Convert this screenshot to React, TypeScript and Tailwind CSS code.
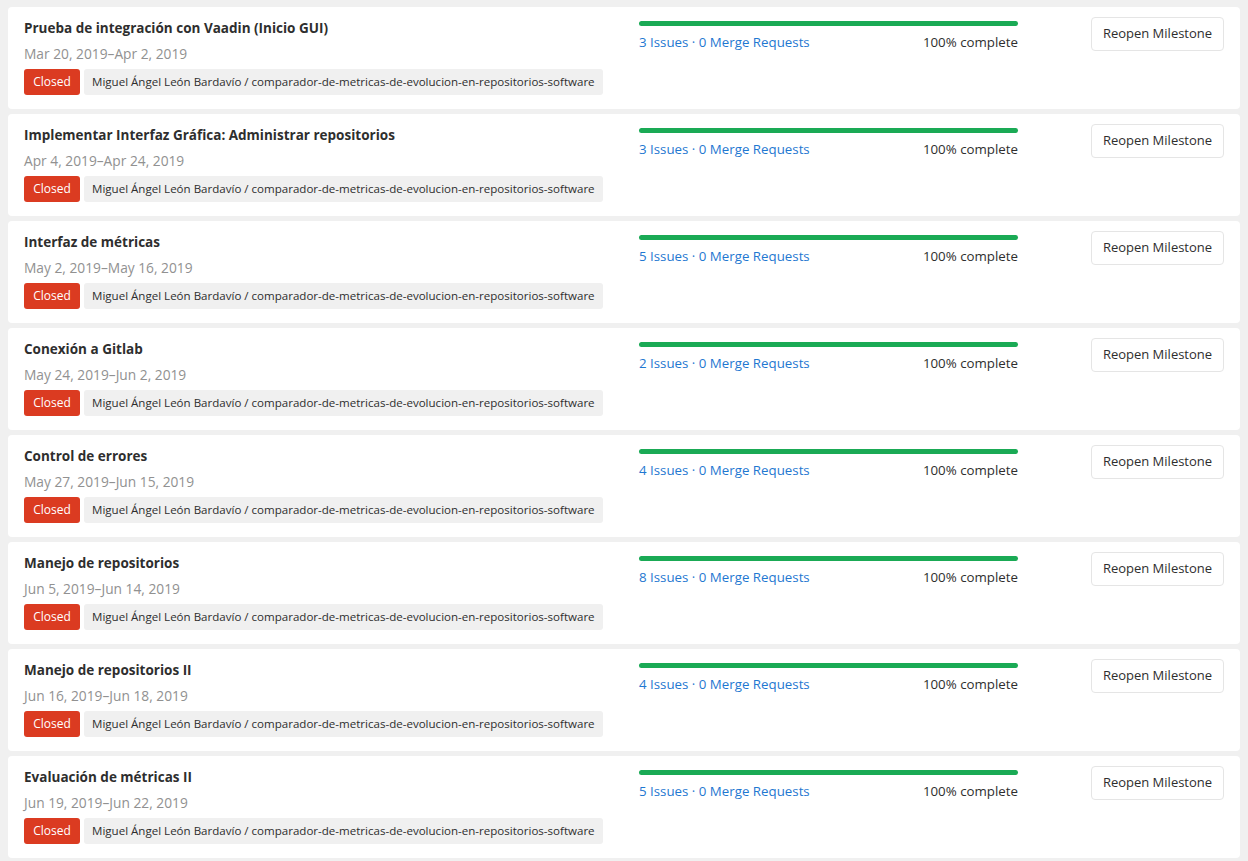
import React from "react";

const rows = [
  { title: "Prueba de integración con Vaadin (Inicio GUI)", date: "Mar 20, 2019–Apr 2, 2019", issues: 3 },
  { title: "Implementar Interfaz Gráfica: Administrar repositorios", date: "Apr 4, 2019–Apr 24, 2019", issues: 3 },
  { title: "Interfaz de métricas", date: "May 2, 2019–May 16, 2019", issues: 5 },
  { title: "Conexión a Gitlab", date: "May 24, 2019–Jun 2, 2019", issues: 2 },
  { title: "Control de errores", date: "May 27, 2019–Jun 15, 2019", issues: 4 },
  { title: "Manejo de repositorios", date: "Jun 5, 2019–Jun 14, 2019", issues: 8 },
  { title: "Manejo de repositorios II", date: "Jun 16, 2019–Jun 18, 2019", issues: 4 },
  { title: "Evaluación de métricas II", date: "Jun 19, 2019–Jun 22, 2019", issues: 5 },
];

export default function App() {
  return (
    <div
      className="min-h-[861px] w-[1248px] bg-[#f0f0f0] px-[8px] pt-[7px]"
      style={{ fontFamily: "'Open Sans', 'Noto Sans', sans-serif" }}
    >
      <div className="flex flex-col gap-[5px]">
        {rows.map((r, i) => (
          <div key={i} className="flex h-[102px] rounded-[4px] bg-white px-[16px] pt-[11px]">
            <div className="w-[615px] shrink-0">
              <div className="h-[20px] text-[13.5px] font-bold leading-[20px] text-[#2e2e2e]">{r.title}</div>
              <div className="mt-[6px] h-[20px] text-[13.75px] leading-[20px] text-[#919191]">{r.date}</div>
              <div className="mt-[5px] flex gap-[4px]">
                <span className="flex h-[26px] w-[56px] items-center justify-center rounded-[3px] bg-[#db3b21] text-[12px] text-white">
                  Closed
                </span>
                <span className="flex h-[26px] items-center rounded-[3px] bg-[#f0f0f0] px-[8px] text-[11.55px] text-[#2e2e2e]">
                  Miguel Ángel León Bardavío / comparador-de-metricas-de-evolucion-en-repositorios-software
                </span>
              </div>
            </div>
            <div className="w-[379px] shrink-0 pt-[3px]">
              <div className="h-[5px] w-full rounded-full bg-[#1aaa55]" />
              <div className="mt-[6px] flex h-[20px] items-center justify-between text-[13.3px] leading-[20px]">
                <span className="text-[#1f78d1]">
                  {r.issues} Issues · 0 Merge Requests
                </span>
                <span className="text-[#2e2e2e]">100% complete</span>
              </div>
            </div>
            <div className="-mt-[1px] flex flex-1 justify-end">
              <button className="h-[34px] w-[133px] rounded-[4px] border border-[#e5e5e5] bg-white text-[13px] text-[#2e2e2e]">
                Reopen Milestone
              </button>
            </div>
          </div>
        ))}
      </div>
    </div>
  );
}
